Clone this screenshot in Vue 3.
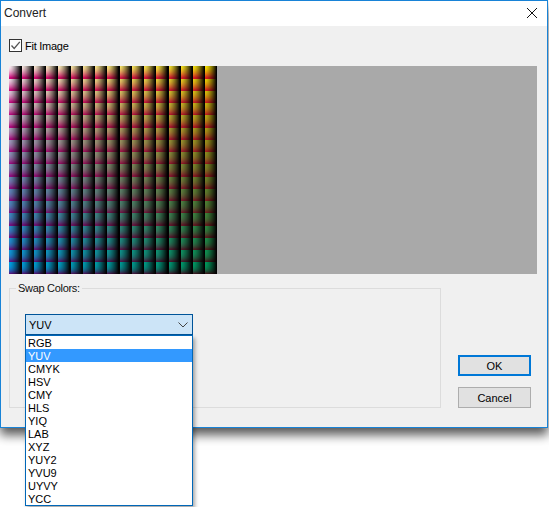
<script setup>
import { ref, onMounted } from 'vue'

const formats = ['RGB', 'YUV', 'CMYK', 'HSV', 'CMY', 'HLS', 'YIQ', 'LAB', 'XYZ', 'YUY2', 'YVU9', 'UYVY', 'YCC']
const selected = 'YUV'
const preview = ref(null)

function bilinear(tl, tr, bl, br, c, r) {
  return (tl * (1 - c) + tr * c) * (1 - r) + (bl * (1 - c) + br * c) * r
}

onMounted(() => {
  const size = 208
  const cells = 17
  const cellSize = size / cells
  const ctx = preview.value.getContext('2d')
  const image = ctx.createImageData(size, size)
  for (let y = 0; y < size; y++) {
    for (let x = 0; x < size; x++) {
      const col = Math.floor(x / cellSize)
      const row = Math.floor(y / cellSize)
      const u = (x - col * cellSize) / (cellSize - 1)
      const v = (y - row * cellSize) / (cellSize - 1)
      const c = col / (cells - 1)
      const r = row / (cells - 1)
      const t = Math.pow(Math.min(v, 1), 1.6 + 1.0 * r)
      const shade = Math.max(0, 1 - Math.pow(Math.min(u, 1), 1.4))
      const greenTop = (232 - 300 * r + 225 * r * r) * (1 - 0.04 * c)
      const blueFade = 1 - 0.9 * r * (1 - r)
      const top = [bilinear(250, 245, 0, 0, c, r), greenTop, bilinear(240, 0, 225, 90, c, r) * blueFade]
      const bottom = [bilinear(212, 222, 85, 60, c, r), bilinear(5, 30, 25, 30, c, r), bilinear(125, 30, 135, 30, c, r)]
      const i = (y * size + x) * 4
      for (let k = 0; k < 3; k++) {
        image.data[i + k] = (top[k] * (1 - t) + bottom[k] * t) * shade
      }
      image.data[i + 3] = 255
    }
  }
  ctx.putImageData(image, 0, 0)
})
</script>

<template>
  <div class="screen">
    <div class="window">
      <header class="titlebar">
        <span class="title">Convert</span>
        <svg class="close" width="10" height="10" viewBox="0 0 10 10">
          <path d="M0 0L10 10M10 0L0 10" stroke="#111" stroke-width="1" fill="none" />
        </svg>
      </header>
      <div class="body">
        <label class="fit">
          <span class="checkbox">
            <svg width="11" height="11" viewBox="0 0 11 11">
              <path d="M1.5 5.5L4.2 8.5L9.8 1.8" stroke="#555" stroke-width="1.3" fill="none" />
            </svg>
          </span>
          <span class="fit-label">Fit Image</span>
        </label>
        <div class="stage">
          <canvas ref="preview" class="preview" width="208" height="208"></canvas>
        </div>
        <div class="lower">
          <fieldset class="group">
            <legend class="legend">Swap Colors:</legend>
            <div class="combo-wrap">
              <div class="combo">
                <span>{{ selected }}</span>
                <svg width="10" height="6" viewBox="0 0 10 6">
                  <path d="M0.5 0.5L5 5L9.5 0.5" stroke="#444" stroke-width="1" fill="none" />
                </svg>
              </div>
              <ul class="list">
                <li v-for="f in formats" :key="f" :class="{ active: f === selected }">{{ f }}</li>
              </ul>
            </div>
          </fieldset>
          <div class="buttons">
            <button class="btn primary">OK</button>
            <button class="btn">Cancel</button>
          </div>
        </div>
      </div>
    </div>
  </div>
</template>

<style scoped>
.screen {
  width: 549px;
  height: 507px;
  background: #fff;
  overflow: hidden;
  font-family: "Liberation Sans", Arial, sans-serif;
  font-size: 11px;
  color: #000;
}
.window {
  box-sizing: border-box;
  width: 548px;
  height: 428px;
  border: 1px solid #1883d7;
  background: #f0f0f0;
  box-shadow: 0 7px 10px rgba(0, 0, 0, 0.65);
}
.titlebar {
  height: 25px;
  box-sizing: border-box;
  background: #fff;
  display: flex;
  align-items: center;
  justify-content: space-between;
  padding: 0 10px 1px 3px;
}
.title {
  font-size: 12px;
  color: #222;
}
.close {
  display: block;
}
.body {
  padding: 13px 0 0 8px;
}
.fit {
  display: flex;
  align-items: center;
  gap: 3px;
  height: 13px;
}
.fit-label {
  letter-spacing: -0.25px;
}
.checkbox {
  box-sizing: border-box;
  width: 13px;
  height: 13px;
  border: 1px solid #333;
  background: #fff;
  display: flex;
}
.stage {
  margin-top: 14px;
  width: 528px;
  height: 208px;
  background: #a9a9a9;
}
.preview {
  display: block;
}
.lower {
  display: flex;
  margin-top: 8px;
}
.group {
  box-sizing: border-box;
  width: 432px;
  height: 126px;
  margin: 0;
  padding: 19px 0 0 15px;
  border: 1px solid #dcdcdc;
  min-width: 0;
}
.legend {
  margin-left: -9px;
  padding: 0 2px;
  line-height: 13px;
  color: #111;
  letter-spacing: -0.3px;
}
.combo-wrap {
  position: relative;
  width: 168px;
}
.combo {
  box-sizing: border-box;
  height: 21px;
  border: 1px solid #005499;
  background: #cce4f7;
  display: flex;
  align-items: center;
  justify-content: space-between;
  padding: 0 4px 0 3px;
}
.list {
  position: absolute;
  left: 0;
  top: 21px;
  width: 168px;
  box-sizing: border-box;
  margin: 0;
  padding: 0;
  list-style: none;
  background: #fff;
  border: 1px solid #0067b8;
  box-shadow: 2px 3px 4px rgba(0, 0, 0, 0.35);
  z-index: 2;
}
.list li {
  height: 13px;
  line-height: 14px;
  padding-left: 2px;
}
.list li.active {
  background: #3399ff;
  color: #fff;
}
.buttons {
  margin-left: 17px;
  width: 73px;
  height: 126px;
  display: flex;
  flex-direction: column;
  justify-content: flex-end;
  gap: 11px;
}
.btn {
  box-sizing: border-box;
  height: 21px;
  width: 73px;
  padding: 0;
  background: #e1e1e1;
  border: 1px solid #adadad;
  font: inherit;
  color: #000;
}
.btn.primary {
  border: 2px solid #0078d7;
}
</style>
